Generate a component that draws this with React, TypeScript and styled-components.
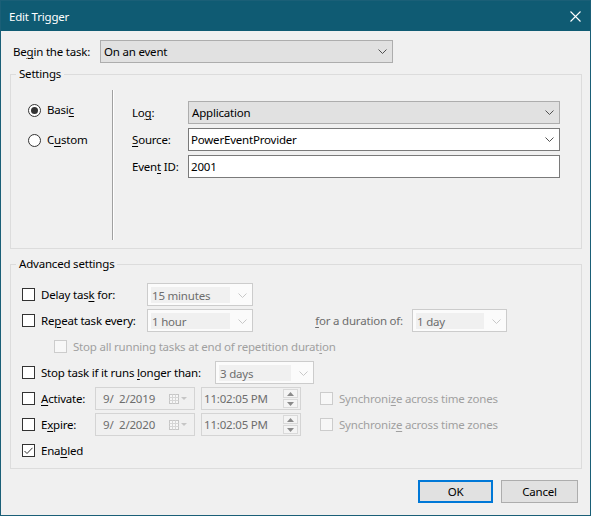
import React from 'react';
import styled, { createGlobalStyle } from 'styled-components';

const GlobalStyle = createGlobalStyle`
  html, body {
    margin: 0;
    padding: 0;
    background: #f0f0f0;
  }
  body {
    font-family: "Noto Sans", "Liberation Sans", sans-serif;
    font-size: 11.5px;
    letter-spacing: -0.2px;
    color: #000;
  }
  * {
    box-sizing: border-box;
  }
`;

const Window = styled.div`
  width: 591px;
  height: 516px;
  border: 1px solid #1a5f77;
  background: #f0f0f0;
  display: flex;
  flex-direction: column;
`;

const TitleBar = styled.div`
  height: 30px;
  flex-shrink: 0;
  background: #0f5b73;
  color: #fff;
  display: flex;
  align-items: center;
  justify-content: space-between;
  padding: 0 9px 0 8px;
`;

const Body = styled.div`
  flex: 1;
  display: flex;
  flex-direction: column;
  padding: 9px 8px 0 9px;
`;

const BeginRow = styled.div`
  display: flex;
  align-items: center;
  padding-left: 3px;
`;

const BeginLabel = styled.span`
  width: 87px;
`;

const Key = styled.u`
  text-decoration-thickness: 1px;
  text-underline-offset: 2px;
`;

const Group = styled.fieldset<{ $gap: number }>`
  margin: ${p => p.$gap}px 0 0;
  padding: 0;
  border: 1px solid #dcdcdc;
  min-width: 0;
`;

const Legend = styled.legend`
  margin-left: 5px;
  padding: 0 3px;
  line-height: 16px;
`;

const SettingsBody = styled.div`
  display: flex;
  padding: 8px 0;
  height: 166px;
`;

const RadioColumn = styled.div`
  width: 101px;
  display: flex;
  flex-direction: column;
  gap: 14px;
  padding: 12px 0 0 17px;
`;

const RadioRow = styled.label`
  display: flex;
  align-items: center;
  gap: 6px;
  line-height: 16px;
`;

const RadioDot = styled.span<{ $checked?: boolean }>`
  width: 13px;
  height: 13px;
  border-radius: 50%;
  border: 1px solid #333;
  background: #fff;
  display: flex;
  align-items: center;
  justify-content: center;

  &::after {
    content: '';
    width: 7px;
    height: 7px;
    border-radius: 50%;
    background: ${p => (p.$checked ? '#333' : 'transparent')};
  }
`;

const Separator = styled.div`
  width: 2px;
  border-left: 1px solid #a0a0a0;
  border-right: 1px solid #fff;
`;

const FieldGrid = styled.div`
  display: grid;
  grid-template-columns: 56px 372px;
  grid-auto-rows: 23px;
  row-gap: 4px;
  align-items: center;
  align-content: start;
  padding: 11px 0 0 18px;
`;

const Combo = styled.div<{ $tone: 'list' | 'edit'; $width?: number }>`
  height: 23px;
  width: ${p => (p.$width ? `${p.$width}px` : '100%')};
  display: flex;
  align-items: center;
  justify-content: space-between;
  padding: 0 5px 0 ${p => (p.$tone === 'list' ? 3 : 2)}px;
  border: 1px solid ${p => (p.$tone === 'list' ? '#adadad' : '#7a7a7a')};
  background: ${p => (p.$tone === 'list' ? '#e1e1e1' : '#fff')};
`;

const TextBox = styled.div`
  height: 23px;
  display: flex;
  align-items: center;
  padding-left: 2px;
  border: 1px solid #7a7a7a;
  background: #fff;
`;

const AdvancedBody = styled.div`
  display: flex;
  flex-direction: column;
  gap: 3px;
  padding: 11px 0 6px 11px;
`;

const Row = styled.div<{ $indent?: number }>`
  display: flex;
  align-items: center;
  height: 23px;
  padding-left: ${p => p.$indent ?? 0}px;
`;

const CheckCell = styled.label<{ $width?: number; $disabled?: boolean }>`
  display: flex;
  align-items: center;
  gap: 6px;
  flex-shrink: 0;
  width: ${p => (p.$width ? `${p.$width}px` : 'auto')};
  color: ${p => (p.$disabled ? '#a0a0a0' : '#000')};
`;

const CheckBox = styled.span<{ $disabled?: boolean }>`
  width: 13px;
  height: 13px;
  flex-shrink: 0;
  border: 1px solid ${p => (p.$disabled ? '#cccccc' : '#333')};
  background: ${p => (p.$disabled ? '#f7f7f7' : '#fff')};
  display: flex;
  align-items: center;
  justify-content: center;
`;

const DisabledCombo = styled.div<{ $width: number }>`
  width: ${p => p.$width}px;
  height: 23px;
  flex-shrink: 0;
  display: flex;
  align-items: center;
  padding: 3px 5px 2px 3px;
  border: 1px solid #cccccc;
  background: #fbfbfb;
  color: #6d6d6d;
`;

const DisabledEdit = styled.span`
  flex: 1;
  align-self: stretch;
  display: flex;
  align-items: center;
  padding-left: 1px;
  margin-right: 8px;
  background: #f0f0f0;
`;

const DurationLabel = styled.span`
  width: 150px;
  margin-right: 9px;
  text-align: right;
  color: #6d6d6d;
`;

const Picker = styled.div<{ $width: number; $gap?: number }>`
  width: ${p => p.$width}px;
  height: 23px;
  flex-shrink: 0;
  margin-right: ${p => p.$gap ?? 0}px;
  display: flex;
  align-items: center;
  justify-content: space-between;
  border: 1px solid #d4d4d4;
  background: #f0f0f0;
  color: #6d6d6d;
`;

const PickerText = styled.span<{ $pad: number }>`
  padding-left: ${p => p.$pad}px;
  white-space: pre;
`;

const CalendarSlot = styled.span`
  display: flex;
  margin-right: 6px;
`;

const Spinner = styled.div`
  display: flex;
  flex-direction: column;
  gap: 1px;
  margin-right: 2px;
`;

const SpinButton = styled.span`
  width: 15px;
  height: 9px;
  border: 1px solid #d9d9d9;
  background: #f4f4f4;
  display: flex;
  align-items: center;
  justify-content: center;
`;

const ButtonRow = styled.div`
  display: flex;
  justify-content: flex-end;
  gap: 8px;
  margin-top: 11px;
  padding-right: 4px;
`;

const Button = styled.button<{ $primary?: boolean; $width: number }>`
  width: ${p => p.$width}px;
  height: 23px;
  padding: 0;
  font: inherit;
  letter-spacing: inherit;
  color: #000;
  background: #e1e1e1;
  border: ${p => (p.$primary ? '2px solid #0078d7' : '1px solid #adadad')};
`;

const Chevron = ({ disabled }: { disabled?: boolean }) => (
  <svg width="9" height="5" viewBox="0 0 9 5">
    <polyline
      points="0.5,0.5 4.5,4.5 8.5,0.5"
      fill="none"
      stroke={disabled ? '#c8c8c8' : '#505050'}
      strokeWidth="1"
    />
  </svg>
);

const CloseIcon = () => (
  <svg width="11" height="11" viewBox="0 0 11 11">
    <path d="M0.5 0.5 L10.5 10.5 M10.5 0.5 L0.5 10.5" stroke="#fff" strokeWidth="1.1" />
  </svg>
);

const CheckMark = () => (
  <svg width="9" height="8" viewBox="0 0 9 8">
    <polyline points="0.5,4 3,6.5 8.5,0.8" fill="none" stroke="#333" strokeWidth="1" />
  </svg>
);

const CalendarIcon = () => (
  <svg width="19" height="10" viewBox="0 0 19 10">
    <rect x="0.5" y="0.5" width="9" height="9" fill="#f7f7f7" stroke="#c6c6c6" />
    <path d="M0.5 3.5 H9.5 M0.5 6.5 H9.5 M3.5 0.5 V9.5 M6.5 0.5 V9.5" stroke="#d6d6d6" />
    <polygon points="12,3 18,3 15,6" fill="#c6c6c6" />
  </svg>
);

const Arrow = ({ up }: { up?: boolean }) => (
  <svg width="7" height="4" viewBox="0 0 7 4">
    <polygon points={up ? '0,4 7,4 3.5,0' : '0,0 7,0 3.5,4'} fill="#8a8a8a" />
  </svg>
);

const Check = ({ checked, disabled }: { checked?: boolean; disabled?: boolean }) => (
  <CheckBox $disabled={disabled}>{checked && <CheckMark />}</CheckBox>
);

const DateTimeRow = ({ label, date, sync }: { label: React.ReactNode; date: string; sync: React.ReactNode }) => (
  <Row>
    <CheckCell $width={73}>
      <Check />
      <span>{label}</span>
    </CheckCell>
    <Picker $width={100} $gap={6}>
      <PickerText $pad={7}>{date}</PickerText>
      <CalendarSlot>
        <CalendarIcon />
      </CalendarSlot>
    </Picker>
    <Picker $width={100} $gap={19}>
      <PickerText $pad={2}>11:02:05 PM</PickerText>
      <Spinner>
        <SpinButton>
          <Arrow up />
        </SpinButton>
        <SpinButton>
          <Arrow />
        </SpinButton>
      </Spinner>
    </Picker>
    <CheckCell $disabled>
      <Check disabled />
      <span>{sync}</span>
    </CheckCell>
  </Row>
);

export default function App() {
  return (
    <>
      <GlobalStyle />
      <Window>
        <TitleBar>
          <span>Edit Trigger</span>
          <CloseIcon />
        </TitleBar>
        <Body>
          <BeginRow>
            <BeginLabel>
              Be<Key>g</Key>in the task:
            </BeginLabel>
            <Combo $tone="list" $width={293}>
              <span>On an event</span>
              <Chevron />
            </Combo>
          </BeginRow>

          <Group $gap={3}>
            <Legend>Settings</Legend>
            <SettingsBody>
              <RadioColumn>
                <RadioRow>
                  <RadioDot $checked />
                  <span>
                    Basi<Key>c</Key>
                  </span>
                </RadioRow>
                <RadioRow>
                  <RadioDot />
                  <span>
                    C<Key>u</Key>stom
                  </span>
                </RadioRow>
              </RadioColumn>
              <Separator />
              <FieldGrid>
                <span>
                  Lo<Key>g</Key>:
                </span>
                <Combo $tone="list">
                  <span>Application</span>
                  <Chevron />
                </Combo>
                <span>
                  <Key>S</Key>ource:
                </span>
                <Combo $tone="edit">
                  <span>PowerEventProvider</span>
                  <Chevron />
                </Combo>
                <span>
                  Even<Key>t</Key> ID:
                </span>
                <TextBox>2001</TextBox>
              </FieldGrid>
            </SettingsBody>
          </Group>

          <Group $gap={7}>
            <Legend>Advanced settings</Legend>
            <AdvancedBody>
              <Row>
                <CheckCell $width={125}>
                  <Check />
                  <span>
                    Delay tas<Key>k</Key> for:
                  </span>
                </CheckCell>
                <DisabledCombo $width={106}>
                  <DisabledEdit>15 minutes</DisabledEdit>
                  <Chevron disabled />
                </DisabledCombo>
              </Row>
              <Row>
                <CheckCell $width={125}>
                  <Check />
                  <span>
                    Re<Key>p</Key>eat task every:
                  </span>
                </CheckCell>
                <DisabledCombo $width={106}>
                  <DisabledEdit>1 hour</DisabledEdit>
                  <Chevron disabled />
                </DisabledCombo>
                <DurationLabel>
                  <Key>f</Key>or a duration of:
                </DurationLabel>
                <DisabledCombo $width={95}>
                  <DisabledEdit>1 day</DisabledEdit>
                  <Chevron disabled />
                </DisabledCombo>
              </Row>
              <Row $indent={32}>
                <CheckCell $disabled>
                  <Check disabled />
                  <span>
                    Stop all running tasks at end of repetition durat<Key>i</Key>on
                  </span>
                </CheckCell>
              </Row>
              <Row>
                <CheckCell $width={193}>
                  <Check />
                  <span>
                    Stop task if it runs <Key>l</Key>onger than:
                  </span>
                </CheckCell>
                <DisabledCombo $width={99}>
                  <DisabledEdit>3 days</DisabledEdit>
                  <Chevron disabled />
                </DisabledCombo>
              </Row>
              <DateTimeRow
                label={
                  <>
                    <Key>A</Key>ctivate:
                  </>
                }
                date="9/  2/2019"
                sync={
                  <>
                    Synchroni<Key>z</Key>e across time zones
                  </>
                }
              />
              <DateTimeRow
                label={
                  <>
                    E<Key>x</Key>pire:
                  </>
                }
                date="9/  2/2020"
                sync={
                  <>
                    Synchroniz<Key>e</Key> across time zones
                  </>
                }
              />
              <Row>
                <CheckCell>
                  <Check checked />
                  <span>
                    Ena<Key>b</Key>led
                  </span>
                </CheckCell>
              </Row>
            </AdvancedBody>
          </Group>

          <ButtonRow>
            <Button $primary $width={75}>
              OK
            </Button>
            <Button $width={77}>Cancel</Button>
          </ButtonRow>
        </Body>
      </Window>
    </>
  );
}
